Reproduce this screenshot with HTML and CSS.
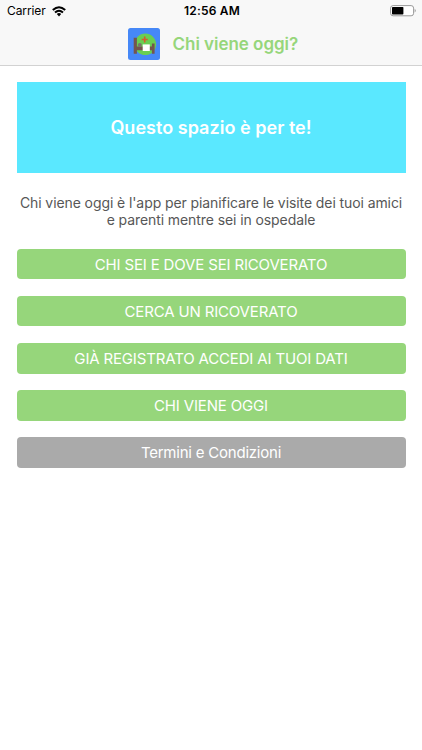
FILE: index.html
```html
<!DOCTYPE html>
<html lang="it">
<head>
<meta charset="utf-8">
<title>Chi viene oggi?</title>
<link rel="stylesheet" href="styles.css">
</head>
<body>
<header class="header">
  <div class="status">
    <div class="network"><span class="carrier">Carrier</span>
      <svg class="wifi" width="14" height="11" viewBox="0 0 14 11" fill="none" stroke="#000" stroke-width="2"><path d="M.8 4.1Q7-1.7 13.2 4.1M3 6.5Q7 2.9 11 6.5"/><path d="M4.8 8Q7 6.2 9.2 8L7 10.4Z" fill="#000" stroke="none"/></svg>
    </div>
    <span class="time">12:56 AM</span>
    <svg class="battery" width="28" height="12" viewBox="0 0 28 12"><rect x="1.6" y=".6" width="23" height="10.2" rx="2.5" fill="#fff" stroke="#999" stroke-width="1"/><rect x="3" y="2" width="11.4" height="7.4" rx=".7"/><path d="M25.7 3.8Q27.9 5.7 25.7 7.6Z" fill="#999"/></svg>
  </div>
  <div class="brand">
    <svg class="logo" width="34" height="34" viewBox="0 0 34 34"><rect x="1" y="1" width="32" height="32" rx="2.5" fill="#4688f7"/><circle cx="18.3" cy="17.3" r="10.8" fill="#69cf52"/><path d="M6.7 10.8h3.2v8.7h15v-3h2.7v10.2h-2.7v-3.5h-15v3.5H6.7z" fill="#75564c"/><circle cx="12.8" cy="18.1" r="2" fill="#79746a"/><path d="M15.7 17.4h7.1v6.6h-7.1z" fill="#fff"/><path d="M17.7 9.5v6M14.7 12.5h6" stroke="#d65b2d" stroke-width="1.6"/></svg>
    <h1 class="title">Chi viene oggi?</h1>
  </div>
</header>
<main class="content">
  <section class="banner"><h2 class="slogan">Questo spazio è per te!</h2></section>
  <p class="intro">Chi viene oggi è l'app per pianificare le visite dei tuoi amici<br>e parenti mentre sei in ospedale</p>
  <nav class="actions">
    <button class="button">CHI SEI E DOVE SEI RICOVERATO</button>
    <button class="button">CERCA UN RICOVERATO</button>
    <button class="button">GIÀ REGISTRATO ACCEDI AI TUOI DATI</button>
    <button class="button">CHI VIENE OGGI</button>
    <button class="button terms">Termini e Condizioni</button>
  </nav>
</main>
</body>
</html>
```
FILE: styles.css
```css
* { box-sizing: border-box; }
body { margin: 0; background: #fff; font-family: Inter, "Liberation Sans", sans-serif; }
.header { height: 66px; background: #f8f8f8; border-bottom: 1px solid #d2d2d2; }
.status { height: 22px; padding: 0 5px 0 7px; display: grid; grid-template-columns: 1fr auto 1fr; align-items: center; font-size: 12px; line-height: 22px; }
.network { display: flex; align-items: center; gap: 6px; }
.carrier { letter-spacing: -.1px; }
.time { font-weight: 600; letter-spacing: .2px; }
.battery { justify-self: end; }
.brand { height: 43px; padding-left: 127px; display: flex; align-items: center; gap: 11.5px; }
.title { margin: 0; color: #96d67b; font-size: 17px; line-height: 22px; font-weight: 600; letter-spacing: -.03px; white-space: nowrap; }
.content { padding: 16px 16.5px 0; }
.banner { height: 91px; background: #5ae8ff; display: flex; align-items: center; justify-content: center; }
.slogan { margin: 0; color: #fff; font-size: 18px; font-weight: 600; letter-spacing: .03px; white-space: nowrap; }
.intro { margin: 21px 0 0; color: #575757; font-size: 14px; line-height: 17px; letter-spacing: -.09px; text-align: center; white-space: nowrap; }
.actions { margin-top: 21px; display: grid; gap: 16.7px; }
.button { height: 30.4px; padding: 1px 0 0; border: 0; border-radius: 4px; background: #96d67b; color: #fff; font: 15px/29.4px Inter, "Liberation Sans", sans-serif; letter-spacing: -.16px; white-space: nowrap; }
.terms { background: #aaa; letter-spacing: -.22px; }
```
